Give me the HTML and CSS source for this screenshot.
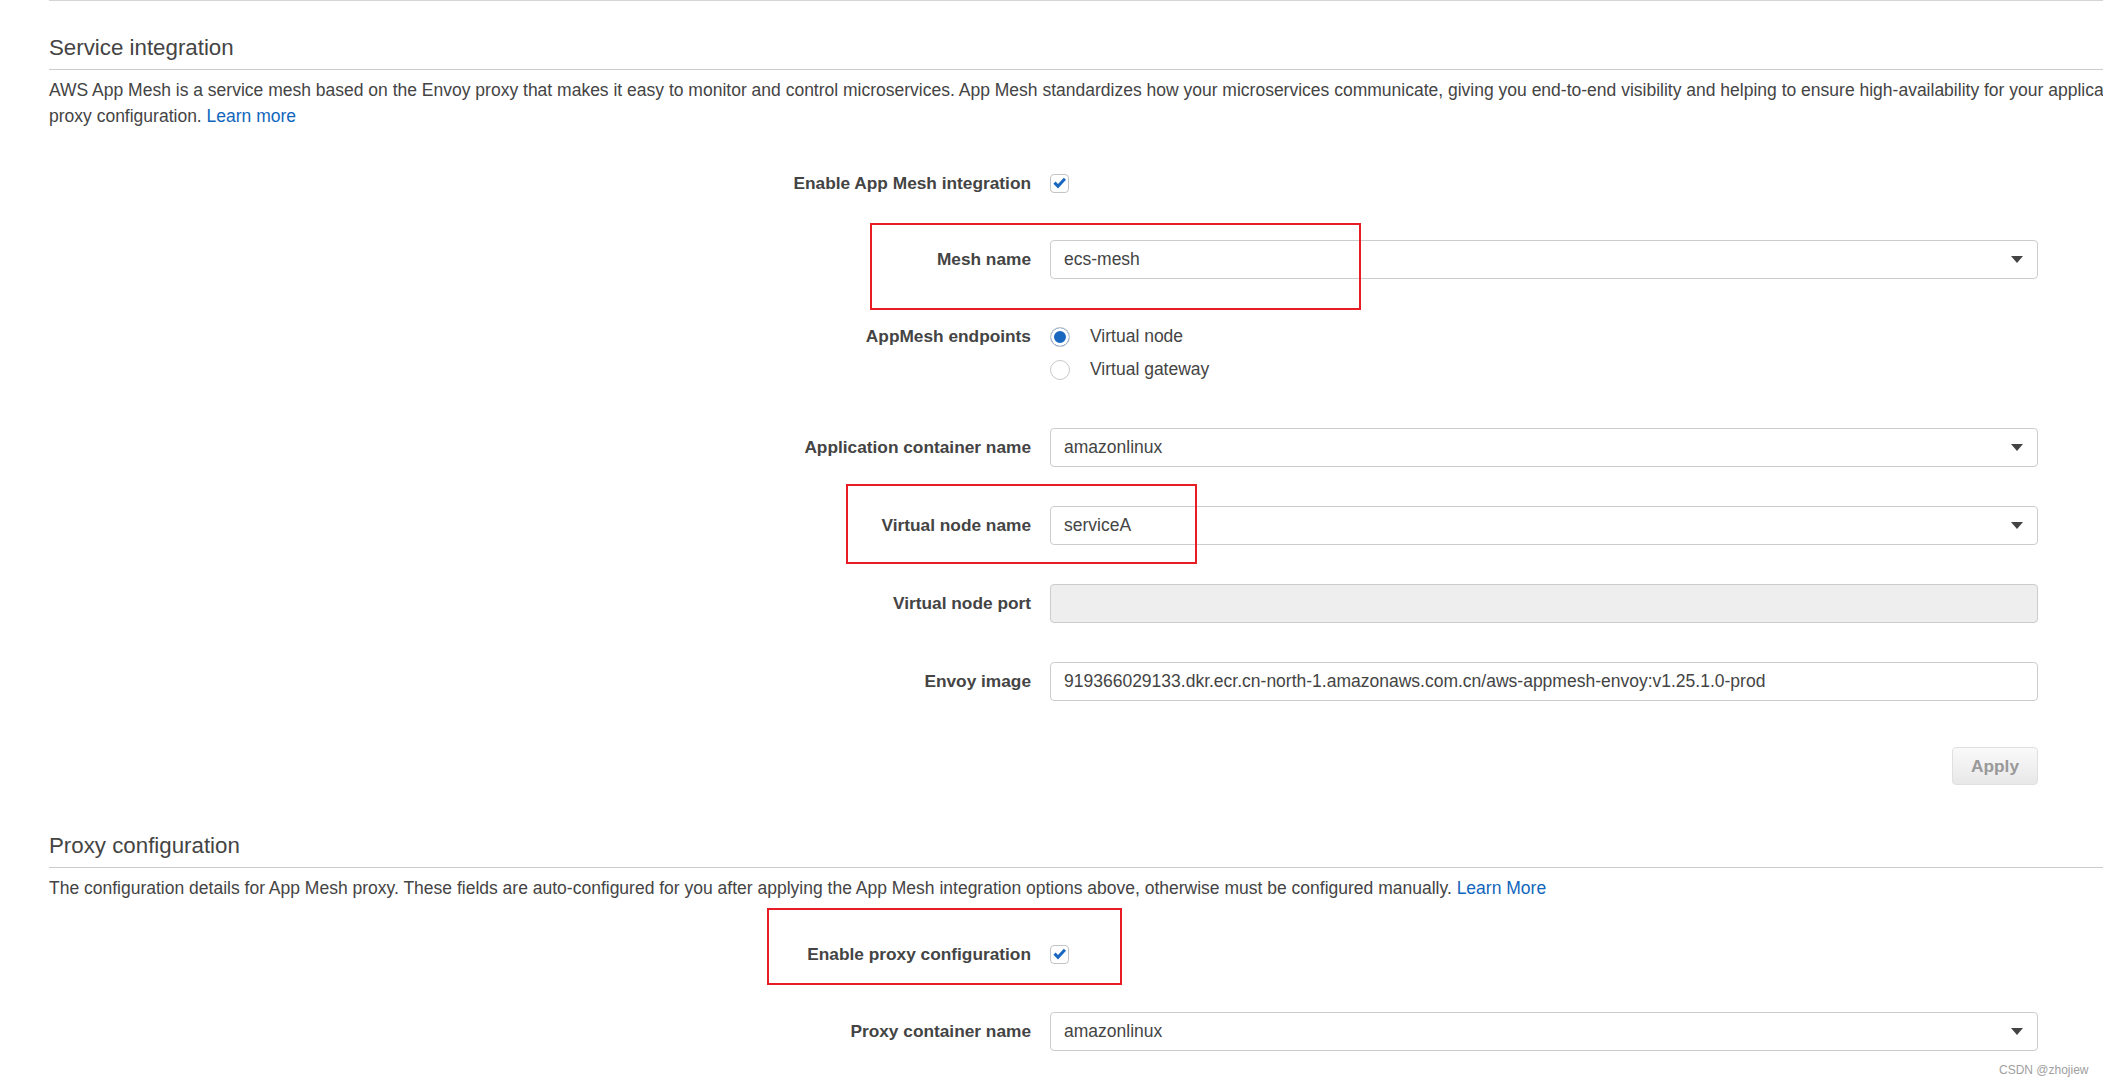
FILE: index.html
```html
<!DOCTYPE html>
<html lang="en">
<head>
    <meta charset="UTF-8">
    <meta name="viewport" content="width=device-width, initial-scale=1.0">
    <title>App Mesh integration</title>
    <link rel="stylesheet" href="styles.css">
</head>
<body>
    <div class="page">
        <div class="divider"></div>

        <!-- Service integration -->
        <section class="panel">
            <h2 class="panel-title">Service integration</h2>
            <p class="panel-desc nowrap">AWS App Mesh is a service mesh based on the Envoy proxy that makes it easy to monitor and control microservices. App Mesh standardizes how your microservices communicate, giving you end-to-end visibility and helping to ensure high-availability for your applications. Enabling App Mesh integration sets up the Envoy container and the<br>proxy configuration. <a href="#">Learn more</a></p>

            <div class="form">
                <div class="row row-check">
                    <label class="row-label">Enable App Mesh integration</label>
                    <div class="row-control">
                        <span class="checkbox checked">
                            <svg width="19" height="19" viewBox="0 0 19 19"><path d="M3.4 9.7 L5.6 7.6 L8 10.1 L13.8 3.8 L16 5.8 L8 14.4 Z" fill="#1a67c0"/></svg>
                        </span>
                    </div>
                </div>

                <div class="row">
                    <label class="row-label">Mesh name</label>
                    <div class="row-control">
                        <div class="select">
                            <span>ecs-mesh</span>
                            <svg class="caret" width="12" height="7" viewBox="0 0 12 7"><path d="M0 0 H12 L6 7 Z" fill="#444"/></svg>
                        </div>
                    </div>
                </div>

                <div class="row row-radios">
                    <label class="row-label">AppMesh endpoints</label>
                    <div class="row-control">
                        <div class="radio-item"><span class="radio checked"></span>Virtual node</div>
                        <div class="radio-item"><span class="radio"></span>Virtual gateway</div>
                    </div>
                </div>

                <div class="row">
                    <label class="row-label">Application container name</label>
                    <div class="row-control">
                        <div class="select">
                            <span>amazonlinux</span>
                            <svg class="caret" width="12" height="7" viewBox="0 0 12 7"><path d="M0 0 H12 L6 7 Z" fill="#444"/></svg>
                        </div>
                    </div>
                </div>

                <div class="row">
                    <label class="row-label">Virtual node name</label>
                    <div class="row-control">
                        <div class="select">
                            <span>serviceA</span>
                            <svg class="caret" width="12" height="7" viewBox="0 0 12 7"><path d="M0 0 H12 L6 7 Z" fill="#444"/></svg>
                        </div>
                    </div>
                </div>

                <div class="row">
                    <label class="row-label">Virtual node port</label>
                    <div class="row-control">
                        <div class="input disabled"></div>
                    </div>
                </div>

                <div class="row">
                    <label class="row-label">Envoy image</label>
                    <div class="row-control">
                        <div class="input">919366029133.dkr.ecr.cn-north-1.amazonaws.com.cn/aws-appmesh-envoy:v1.25.1.0-prod</div>
                    </div>
                </div>

                <div class="actions">
                    <button class="btn" disabled>Apply</button>
                </div>
            </div>
        </section>

        <!-- Proxy configuration -->
        <section class="panel panel-proxy">
            <h2 class="panel-title">Proxy configuration</h2>
            <p class="panel-desc">The configuration details for App Mesh proxy. These fields are auto-configured for you after applying the App Mesh integration options above, otherwise must be configured manually. <a href="#">Learn More</a></p>

            <div class="form form-proxy">
                <div class="row row-check">
                    <label class="row-label">Enable proxy configuration</label>
                    <div class="row-control">
                        <span class="checkbox checked">
                            <svg width="19" height="19" viewBox="0 0 19 19"><path d="M3.4 9.7 L5.6 7.6 L8 10.1 L13.8 3.8 L16 5.8 L8 14.4 Z" fill="#1a67c0"/></svg>
                        </span>
                    </div>
                </div>

                <div class="row">
                    <label class="row-label">Proxy container name</label>
                    <div class="row-control">
                        <div class="select">
                            <span>amazonlinux</span>
                            <svg class="caret" width="12" height="7" viewBox="0 0 12 7"><path d="M0 0 H12 L6 7 Z" fill="#444"/></svg>
                        </div>
                    </div>
                </div>
            </div>
        </section>
    </div>

    <!-- red annotation boxes drawn over the screenshot -->
    <div class="mark mark-mesh"></div>
    <div class="mark mark-node"></div>
    <div class="mark mark-proxy"></div>

    <div class="watermark">CSDN @zhojiew</div>
</body>
</html>
```

FILE: styles.css
```css
html, body {
    margin: 0;
    padding: 0;
}
body {
    position: relative;
    width: 2103px;
    height: 1087px;
    overflow: hidden;
    background: #fff;
    color: #444;
    font-family: "Liberation Sans", Arial, sans-serif;
    font-size: 17.5px;
}
.page {
    padding-left: 49px;
}
.divider {
    border-top: 1px solid #d5d5d5;
}
.panel-title {
    margin: 32px 0 0;
    padding-bottom: 6px;
    font-size: 22.3px;
    font-weight: normal;
    line-height: 30px;
    color: #444;
    border-bottom: 1px solid #ccc;
}
.panel-proxy .panel-title {
    margin-top: 46px;
}
.panel-desc {
    margin: 7px 0 0;
    line-height: 26px;
}
.nowrap {
    white-space: nowrap;
}
.panel-desc a {
    color: #1166bb;
    text-decoration: none;
}
.form {
    margin-top: 35px;
}
.form-proxy {
    margin-top: 34px;
}
.row {
    display: flex;
    align-items: center;
    min-height: 39px;
    gap: 19px;
    margin-bottom: 39px;
}
.row-check {
    margin-bottom: 37px;
}
.form-proxy .row-check {
    margin-bottom: 38px;
}
.row-label {
    flex: 0 0 982px;
    text-align: right;
    font-size: 17.3px;
    font-weight: bold;
}
.row-control {
    flex: 0 0 988px;
}
.checkbox {
    display: flex;
    width: 19px;
    height: 19px;
    box-sizing: border-box;
    border: 1px solid #c4c4c4;
    border-radius: 4px;
    background: #fff;
}
.checkbox svg {
    margin: -1px;
}
.select, .input {
    display: flex;
    align-items: center;
    justify-content: space-between;
    height: 39px;
    box-sizing: border-box;
    padding: 0 14px 0 13px;
    border: 1px solid #ccc;
    border-radius: 4px;
    background: #fff;
    color: #444;
    white-space: nowrap;
}
.input.disabled {
    background: #eee;
}
.row-radios {
    align-items: flex-start;
    padding: 2px 0 3px;
}
.row-radios .row-label {
    line-height: 33px;
}
.radio-item {
    display: flex;
    align-items: center;
    gap: 20px;
    height: 33px;
}
.radio {
    width: 20px;
    height: 20px;
    box-sizing: border-box;
    border: 1px solid #c8c8c8;
    border-radius: 50%;
    background: #fff;
}
.radio.checked {
    background: #1a67c0;
    box-shadow: inset 0 0 0 3px #fff;
}
.actions {
    display: flex;
    justify-content: flex-end;
    width: 1989px;
    margin-top: 46px;
}
.btn {
    width: 86px;
    height: 38px;
    padding: 0;
    border: 1px solid #e0e0e0;
    border-radius: 4px;
    background: linear-gradient(#fafafa, #e8e8e8);
    color: #999;
    font-family: "Liberation Sans", Arial, sans-serif;
    font-size: 17.3px;
    font-weight: bold;
}
.mark {
    position: absolute;
    box-sizing: border-box;
    border: 2px solid #e81c25;
}
.mark-mesh {
    left: 870px;
    top: 223px;
    width: 491px;
    height: 87px;
}
.mark-node {
    left: 846px;
    top: 484px;
    width: 351px;
    height: 80px;
}
.mark-proxy {
    left: 767px;
    top: 908px;
    width: 355px;
    height: 77px;
}
.watermark {
    position: absolute;
    left: 1999px;
    top: 1063px;
    font-size: 12px;
    line-height: 14px;
    color: #a0a0a0;
}
```
